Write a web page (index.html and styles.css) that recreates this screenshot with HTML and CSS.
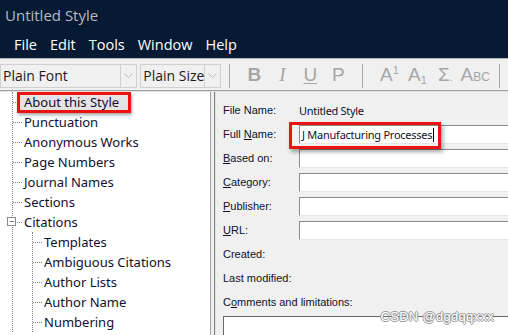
FILE: index.html
```html
<!DOCTYPE html>
<html lang="en">
<head>
  <meta charset="UTF-8" />
  <title>Untitled Style</title>
  <link rel="stylesheet" href="styles.css">
</head>
<body>

  <div class="titlebar">Untitled Style</div>

  <div class="menubar">
    <span>File</span>
    <span>Edit</span>
    <span>Tools</span>
    <span>Window</span>
    <span>Help</span>
  </div>

  <div class="toolbar">
    <div class="combo font-combo">
      <span class="combo-text">Plain Font</span>
      <span class="combo-btn">
        <svg width="9" height="6" viewBox="0 0 9 6"><path d="M0.5 0.5 L4.5 4.5 L8.5 0.5" fill="none" stroke="#b8b8b8" stroke-width="1"/></svg>
      </span>
    </div>
    <div class="combo size-combo">
      <span class="combo-text">Plain Size</span>
      <span class="combo-btn">
        <svg width="9" height="6" viewBox="0 0 9 6"><path d="M0.5 0.5 L4.5 4.5 L8.5 0.5" fill="none" stroke="#b8b8b8" stroke-width="1"/></svg>
      </span>
    </div>
    <div class="sep"></div>
    <div class="tool bold">B</div>
    <div class="tool italic">I</div>
    <div class="tool under">U</div>
    <div class="tool plain">P</div>
    <div class="sep wide"></div>
    <div class="tool sup">A<sup>1</sup></div>
    <div class="tool sub">A<sub>1</sub></div>
    <div class="tool sigma">&Sigma;<span class="dot">.</span></div>
    <div class="tool abc">A<span class="small-caps">BC</span></div>
    <div class="sep"></div>
  </div>

  <div class="main">
    <div class="tree">
      <ul class="branch root">
        <li class="node"><span class="stub"></span><span class="label selected">About this Style</span></li>
        <li class="node"><span class="stub"></span><span class="label">Punctuation</span></li>
        <li class="node"><span class="stub"></span><span class="label">Anonymous Works</span></li>
        <li class="node"><span class="stub"></span><span class="label">Page Numbers</span></li>
        <li class="node"><span class="stub"></span><span class="label">Journal Names</span></li>
        <li class="node"><span class="stub"></span><span class="label">Sections</span></li>
        <li class="node open"><span class="toggle">&minus;</span><span class="stub"></span><span class="label">Citations</span></li>
        <li>
          <ul class="branch child">
            <li class="node"><span class="stub"></span><span class="label">Templates</span></li>
            <li class="node"><span class="stub"></span><span class="label">Ambiguous Citations</span></li>
            <li class="node"><span class="stub"></span><span class="label">Author Lists</span></li>
            <li class="node"><span class="stub"></span><span class="label">Author Name</span></li>
            <li class="node"><span class="stub"></span><span class="label">Numbering</span></li>
          </ul>
        </li>
      </ul>
    </div>

    <div class="panel">
      <div class="form">
        <div class="row"><span class="lbl">File Name:</span><span class="value">Untitled Style</span></div>
        <div class="row"><span class="lbl">Full <u>N</u>ame:</span><span class="field focused">J Manufacturing Processes<span class="caret"></span><span class="mark"></span></span></div>
        <div class="row"><span class="lbl"><u>B</u>ased on:</span><span class="field"></span></div>
        <div class="row"><span class="lbl"><u>C</u>ategory:</span><span class="field"></span></div>
        <div class="row"><span class="lbl"><u>P</u>ublisher:</span><span class="field"></span></div>
        <div class="row"><span class="lbl"><u>U</u>RL:</span><span class="field"></span></div>
        <div class="row"><span class="lbl">Created:</span></div>
        <div class="row"><span class="lbl">Last modified:</span></div>
        <div class="row"><span class="lbl long">C<u>o</u>mments and limitations:</span></div>
        <div class="comments"></div>
      </div>
      <div class="watermark">CSDN @dgdqqxxx</div>
    </div>
  </div>

</body>
</html>
```

FILE: styles.css
```css
body {
  margin: 0;
  width: 508px;
  height: 335px;
  overflow: hidden;
  background: #f0f0f0;
  font-family: "Open Sans", "Noto Sans", sans-serif;
}

.titlebar {
  height: 30px;
  line-height: 30px;
  padding-left: 5px;
  background: #071a33;
  color: #b4bac4;
  font-size: 15px;
}

.menubar {
  height: 28px;
  display: flex;
  align-items: center;
  gap: 13px;
  padding-left: 14px;
  background: #071a33;
  color: #ffffff;
  font-size: 14.5px;
}

.toolbar {
  height: 31px;
  display: flex;
  align-items: center;
  border-top: 1px solid #b4b4b4;
  border-bottom: 1px solid #a0a0a0;
  box-shadow: 0 1px 0 #e2e2e2;
  background: #f0f0f0;
  white-space: nowrap;
}

.combo {
  height: 24px;
  display: flex;
  align-items: center;
  justify-content: space-between;
  border: 1px solid #d0d0d0;
  background: #f0f0f0;
  box-sizing: border-box;
  margin-top: 2px;
}

.font-combo {
  width: 147px;
}

.size-combo {
  width: 84px;
  margin-left: 3px;
}

.combo-text {
  padding-left: 2px;
  font-size: 14px;
  color: #1a1a1a;
}

.combo-btn {
  width: 15px;
  height: 22px;
  display: flex;
  align-items: center;
  justify-content: center;
  border-left: 1px solid #d0d0d0;
}

.sep {
  width: 1px;
  height: 24px;
  margin: 2px 8px 0;
  background: #a8a8a8;
}

.sep.wide {
  margin: 2px 12px 0 10px;
}

.tool {
  width: 30px;
  text-align: center;
  font-family: "Liberation Sans", Arial, sans-serif;
  font-size: 19px;
  color: #a6a6a6;
}

.bold {
  font-weight: bold;
  margin-left: 2px;
}

.italic {
  font-family: "Liberation Serif", serif;
  font-style: italic;
}

.under {
  text-decoration: underline;
  text-underline-offset: 2px;
}

.sup sup,
.sub sub {
  font-size: 11px;
}

.sup sup {
  vertical-align: 7px;
}

.sub sub {
  vertical-align: -3px;
}

.dot {
  font-size: 10px;
}

.abc {
  width: 34px;
}

.small-caps {
  font-size: 12px;
}

.main {
  height: 243px;
  display: flex;
  margin-top: 1px;
}

.tree {
  width: 210px;
  background: #ffffff;
  border-right: 1px solid #a0a0a0;
  font-family: "Noto Sans", "Open Sans", sans-serif;
  font-size: 13px;
  color: #101030;
  overflow: hidden;
}

.branch {
  list-style: none;
  margin: 0;
  padding: 0;
}

.root {
  margin-left: 12px;
  border-left: 1px dotted #808080;
}

.child {
  margin-left: 19px;
  border-left: 1px dotted #808080;
}

.node {
  position: relative;
  height: 20px;
  display: flex;
  align-items: center;
}

.stub {
  width: 9px;
  border-top: 1px dotted #808080;
}

.label {
  padding: 0 2px;
  line-height: 18px;
}

.selected {
  margin-left: -5px;
  padding: 0 9px 0 4px;
  background: #e4e4e4;
  border: 3px solid #ee1111;
  line-height: 15px;
  box-shadow: 1px 2px 3px rgba(0, 0, 0, 0.35);
}

.toggle {
  position: absolute;
  left: -6px;
  top: 5px;
  width: 7px;
  height: 7px;
  border: 1px solid #8a8a8a;
  background: #ffffff;
  font-size: 9px;
  line-height: 7px;
  text-align: center;
  color: #333;
}

.panel {
  position: relative;
  flex: 1;
  margin-left: 3px;
  border-left: 1px solid #808080;
  box-shadow: inset 1px 0 0 #e0e0e0;
  font-family: "Liberation Sans", Tahoma, sans-serif;
  font-size: 11px;
  color: #101028;
}

.form {
  padding: 6px 0 0 8px;
  display: flex;
  flex-direction: column;
}

.row {
  height: 24px;
  display: flex;
  align-items: center;
}

.lbl {
  width: 76px;
  flex-shrink: 0;
  white-space: nowrap;
}

.lbl.long {
  width: auto;
}

.value {
  font-family: "Noto Sans", sans-serif;
  font-size: 11px;
  letter-spacing: -0.3px;
}

.field {
  flex: 1;
  height: 19px;
  box-sizing: border-box;
  background: #ffffff;
  border-top: 1px solid #8a8a8a;
  border-left: 1px solid #8a8a8a;
  border-bottom: 1px solid #e6e6e6;
  font-family: "Noto Sans", sans-serif;
  font-size: 11px;
  letter-spacing: -0.25px;
  line-height: 17px;
  white-space: nowrap;
}

.focused {
  position: relative;
  padding-left: 2px;
}

.mark {
  position: absolute;
  left: -11px;
  top: -4px;
  width: 146px;
  height: 21px;
  border: 3px solid #ee1111;
  box-shadow: 2px 3px 4px rgba(0, 0, 0, 0.35);
}

.caret {
  display: inline-block;
  width: 1px;
  height: 14px;
  margin-left: 1px;
  vertical-align: -3px;
  background: #000;
}

.comments {
  height: 30px;
  margin-top: 2px;
  background: #ffffff;
  border-top: 1px solid #6a6a6a;
  border-left: 1px solid #6a6a6a;
}

.watermark {
  position: absolute;
  right: 14px;
  bottom: 11px;
  font-family: "Liberation Sans", Arial, sans-serif;
  font-size: 13px;
  letter-spacing: 0.3px;
  color: #ffffff;
  text-shadow: 1px 0 0 #9a9a9a, -1px 0 0 #9a9a9a, 0 1px 0 #9a9a9a, 0 -1px 0 #9a9a9a;
}
```
